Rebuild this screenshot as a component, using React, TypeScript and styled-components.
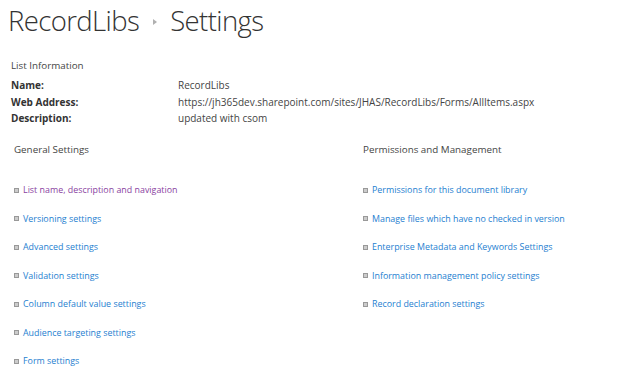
import styled, { createGlobalStyle } from 'styled-components';

const GlobalStyle = createGlobalStyle`
    body {
        margin: 0;
        background: #fff;
        font-family: "Open Sans", "Noto Sans", sans-serif;
        color: #444;
    }
`;

const Page = styled.div`
    padding: 0 0 0 8px;
    width: 632px;
    height: 373px;
    overflow: hidden;
`;

const Title = styled.h1`
    margin: 0;
    padding-top: 3px;
    display: flex;
    align-items: center;
    gap: 10px;
    font-weight: 300;
    font-size: 27.5px;
    line-height: 36px;
    color: #333;
    letter-spacing: -0.6px;
`;

const Crumb = styled.span`
    display: block;
    width: 0;
    height: 0;
    margin: 2px 3px 0 4px;
    border-top: 3px solid transparent;
    border-bottom: 3px solid transparent;
    border-left: 4px solid #b0b0b0;
`;

const InfoHeading = styled.div`
    margin: 20px 0 0 3px;
    font-size: 9.8px;
    line-height: 14px;
    color: #444;
`;

const InfoTable = styled.div`
    margin: 5px 0 0 3px;
    display: grid;
    grid-template-columns: 167px auto;
    row-gap: 2.5px;
    font-size: 10px;
    line-height: 14px;
`;

const Label = styled.div`
    font-weight: 700;
    color: #333;
`;

const Value = styled.div`
    color: #444;
`;

const Sections = styled.div`
    margin-top: 18px;
    display: grid;
    grid-template-columns: 349px auto;
    padding-left: 6px;
`;

const SectionTitle = styled.div`
    font-size: 9.8px;
    line-height: 14px;
    color: #444;
    margin-bottom: 26px;
`;

const LinkList = styled.ul`
    list-style: none;
    margin: 0;
    padding: 0;
    display: flex;
    flex-direction: column;
    gap: 14.5px;
`;

const LinkItem = styled.li`
    display: flex;
    align-items: center;
    gap: 4px;
    font-size: 8.9px;
    line-height: 14px;
`;

const Bullet = styled.span`
    width: 3px;
    height: 3px;
    border: 1px solid #999;
    background: #ccc;
    flex-shrink: 0;
`;

const Link = styled.a<{ $visited?: boolean }>`
    color: ${p => (p.$visited ? '#8a3f9f' : '#1e80d0')};
    text-decoration: none;
`;

const general = [
    'List name, description and navigation',
    'Versioning settings',
    'Advanced settings',
    'Validation settings',
    'Column default value settings',
    'Audience targeting settings',
    'Form settings',
];

const permissions = [
    'Permissions for this document library',
    'Manage files which have no checked in version',
    'Enterprise Metadata and Keywords Settings',
    'Information management policy settings',
    'Record declaration settings',
];

const Section = ({ title, links }: { title: string; links: string[] }) => (
    <div>
        <SectionTitle>{title}</SectionTitle>
        <LinkList>
            {links.map((l, i) => (
                <LinkItem key={l}>
                    <Bullet />
                    <Link href="#" $visited={title === 'General Settings' && i === 0}>{l}</Link>
                </LinkItem>
            ))}
        </LinkList>
    </div>
);

const App = () => (
    <>
        <GlobalStyle />
        <Page>
            <Title>
                RecordLibs<Crumb />Settings
            </Title>
            <InfoHeading>List Information</InfoHeading>
            <InfoTable>
                <Label>Name:</Label>
                <Value>RecordLibs</Value>
                <Label>Web Address:</Label>
                <Value>https://jh365dev.sharepoint.com/sites/JHAS/RecordLibs/Forms/AllItems.aspx</Value>
                <Label>Description:</Label>
                <Value>updated with csom</Value>
            </InfoTable>
            <Sections>
                <Section title="General Settings" links={general} />
                <Section title="Permissions and Management" links={permissions} />
            </Sections>
        </Page>
    </>
);

export default App;
